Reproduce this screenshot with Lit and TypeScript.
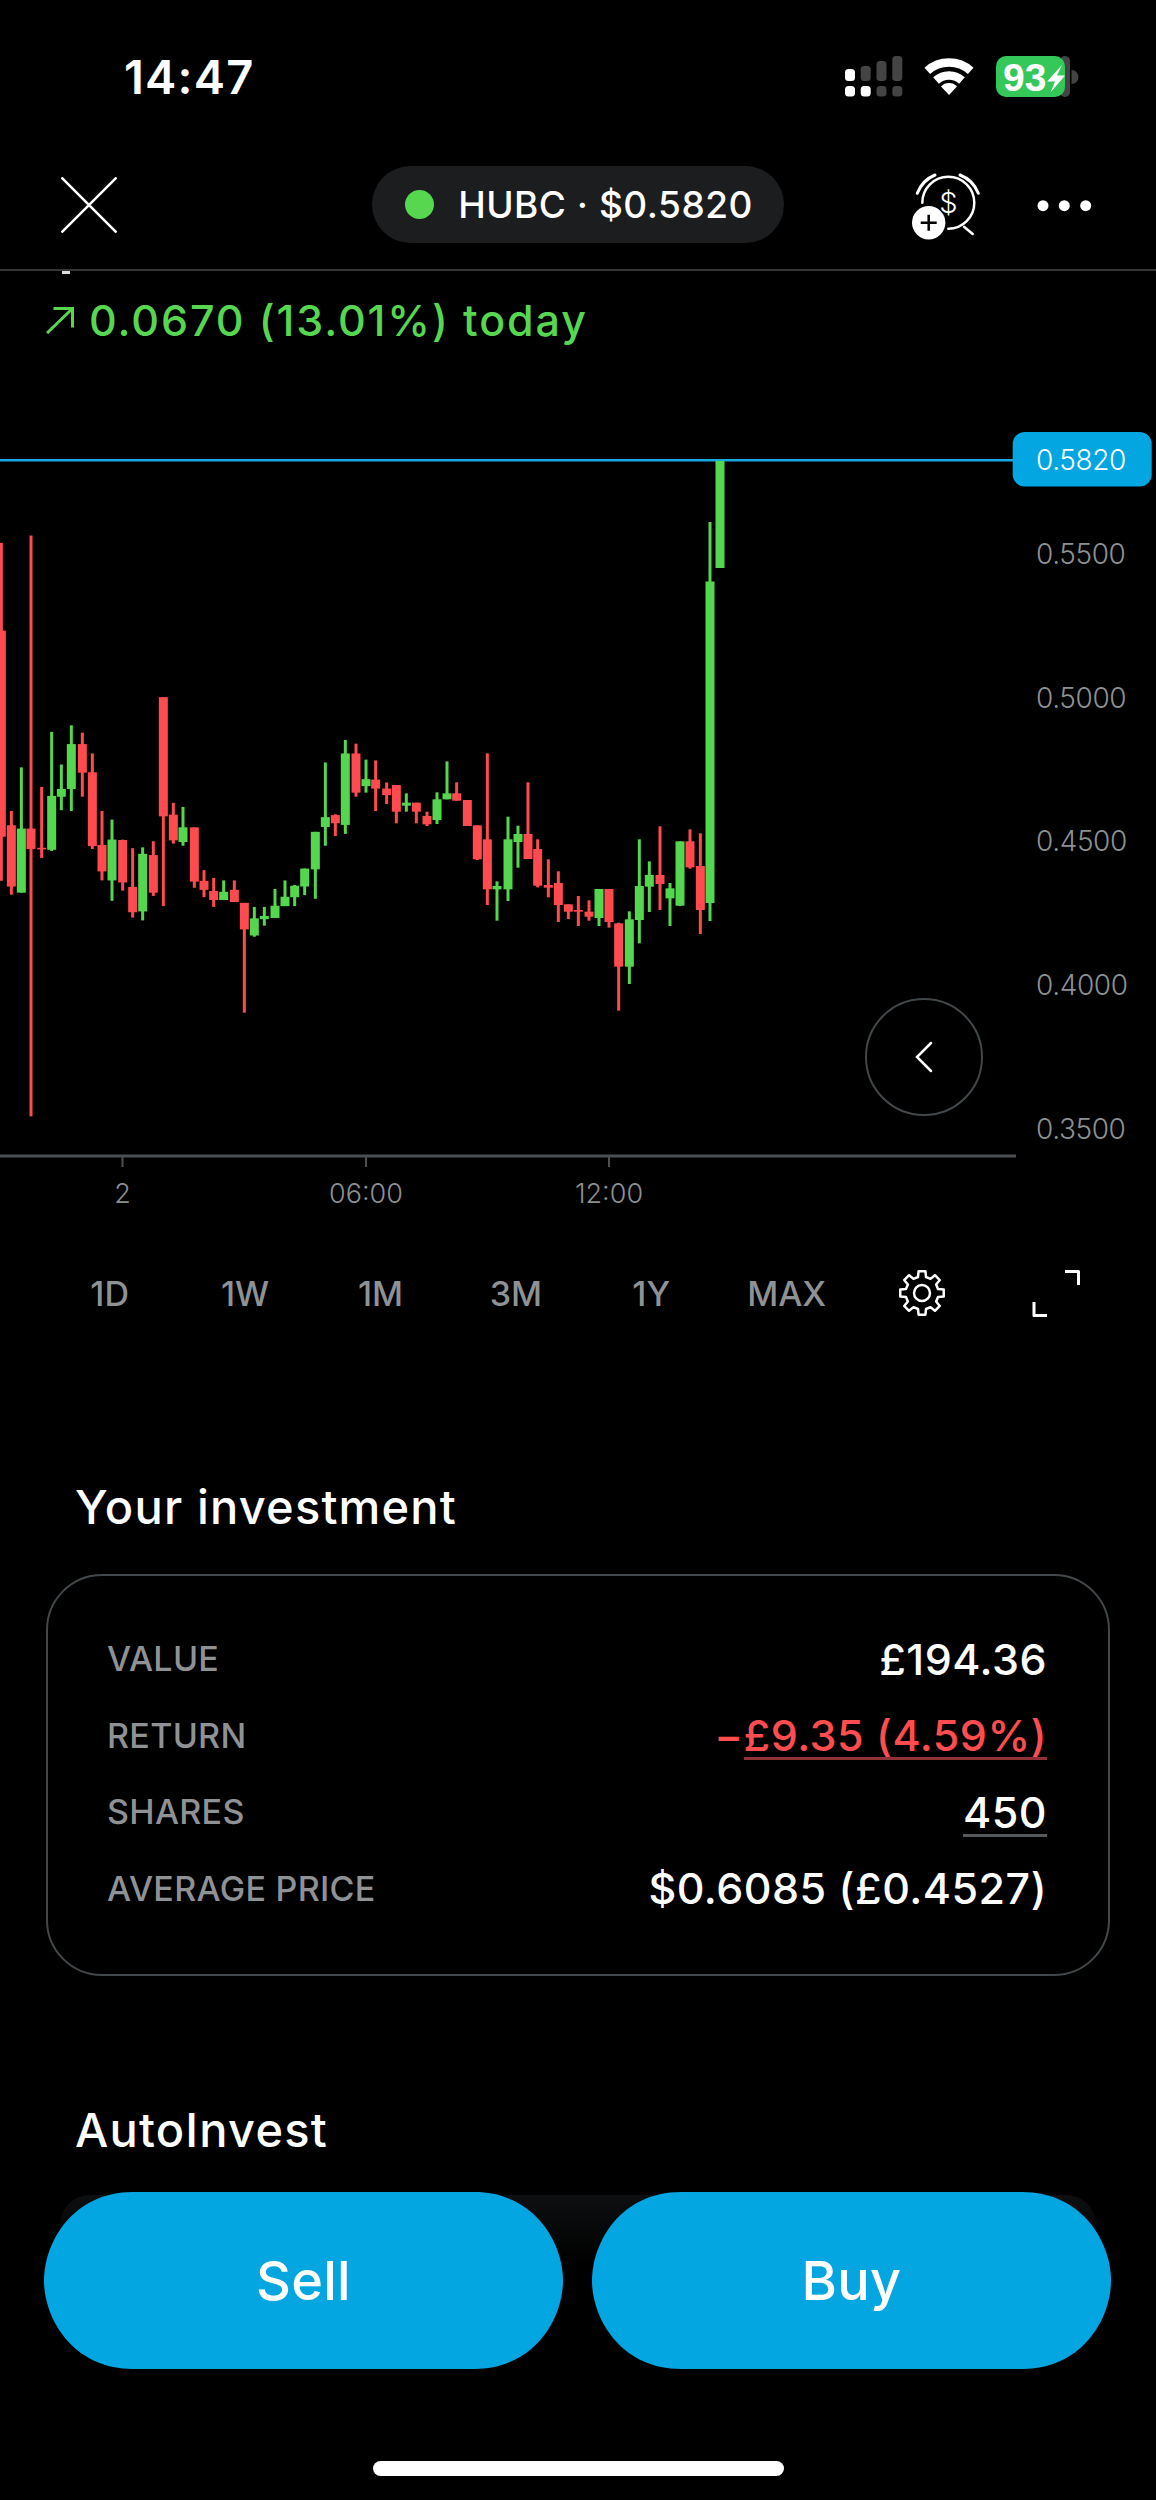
import {css, html, svg, LitElement} from 'lit';
import {customElement} from 'lit/decorators.js';

type Candle = [number, number, number, number, number, 'r' | 'g'];

// x, wick top, wick bottom, body top, body bottom, measured off the screenshot
const firstHalf: Candle[] = [
  [4, 105, 933, 320, 825, 'r'], [34, 762, 967, 797, 947, 'r'], [64, 655, 962, 805, 962, 'g'],
  [93, 87, 1510, 805, 855, 'r'], [125, 703, 877, 852, 856, 'r'], [155, 568, 860, 725, 857, 'g'],
  [184, 648, 760, 708, 727, 'g'], [214, 552, 762, 598, 708, 'g'], [247, 570, 727, 598, 668, 'r'],
  [277, 621, 855, 667, 848, 'r'], [306, 762, 932, 845, 910, 'r'], [336, 783, 982, 832, 932, 'g'],
  [368, 832, 957, 833, 937, 'r'], [398, 853, 1023, 948, 1010, 'r'], [428, 851, 1030, 867, 1008, 'g'],
  [460, 836, 970, 870, 962, 'r'], [490, 483, 995, 483, 775, 'r'], [520, 742, 842, 771, 834, 'r'],
  [549, 752, 847, 802, 838, 'g'], [583, 802, 950, 802, 935, 'r'], [612, 907, 973, 933, 955, 'r'],
  [641, 926, 997, 958, 980, 'r'], [671, 932, 980, 960, 980, 'g'], [703, 932, 985, 955, 985, 'r'],
  [733, 987, 1256, 987, 1052, 'r'], [763, 997, 1070, 1025, 1067, 'g'], [793, 997, 1043, 1019, 1027, 'g'],
  [825, 953, 1024, 994, 1024, 'g'], [855, 932, 995, 972, 995, 'g'], [884, 943, 995, 945, 973, 'g'],
  [914, 903, 968, 903, 947, 'g'], [946, 813, 977, 813, 905, 'g'], [976, 643, 847, 777, 801, 'g'],
  [1006, 770, 823, 772, 792, 'r'], [1036, 588, 818, 621, 796, 'g'], [1068, 597, 727, 621, 717, 'r'],
  [1098, 636, 717, 684, 701, 'g'], [1127, 638, 762, 685, 707, 'r'], [1160, 692, 745, 707, 723, 'r'],
];

const secondHalf: Candle[] = [
  [49, 315, 430, 315, 395, 'r'], [79, 340, 395, 368, 377, 'g'], [109, 368, 430, 368, 395, 'r'],
  [141, 395, 438, 408, 433, 'r'], [171, 337, 432, 358, 420, 'g'], [201, 244, 358, 340, 358, 'g'],
  [230, 307, 362, 340, 362, 'r'], [262, 360, 438, 360, 438, 'r'], [292, 436, 540, 436, 538, 'r'],
  [322, 220, 675, 478, 628, 'r'], [351, 604, 722, 618, 628, 'g'], [384, 410, 663, 478, 628, 'g'],
  [414, 437, 563, 462, 486, 'g'], [444, 307, 537, 462, 537, 'r'], [473, 478, 622, 507, 617, 'r'],
  [505, 538, 652, 615, 623, 'r'], [535, 574, 726, 609, 675, 'r'], [565, 673, 717, 673, 695, 'r'],
  [595, 648, 738, 690, 695, 'r'], [627, 661, 722, 695, 710, 'r'], [657, 627, 738, 627, 714, 'g'],
  [687, 627, 743, 627, 726, 'r'], [716, 728, 992, 730, 860, 'r'], [748, 694, 912, 718, 860, 'g'],
  [778, 478, 790, 618, 720, 'g'], [808, 544, 696, 585, 620, 'g'], [840, 439, 690, 585, 612, 'r'],
  [870, 609, 738, 625, 655, 'g'], [900, 484, 678, 484, 677, 'g'], [930, 448, 566, 484, 562, 'r'],
  [961, 460, 762, 558, 690, 'r'],
];

const candles: Candle[] = [
  ...firstHalf.map(([x, a, b, c, d, k]): Candle => [
    x / 3, 500 + a / 2.45, 500 + b / 2.45, 500 + c / 2.45, 500 + d / 2.45, k,
  ]),
  ...secondHalf.map(([x, a, b, c, d, k]): Candle => [
    380 + x / 3, 680 + a / 3, 680 + b / 3, 680 + c / 3, 680 + d / 3, k,
  ]),
  [710, 522, 921, 581.5, 903, 'g'],
  [720, 461, 568, 461, 568, 'g'],
];

const axisPrices = [
  ['0.5500', 554], ['0.5000', 698], ['0.4500', 841], ['0.4000', 985], ['0.3500', 1129],
] as const;
const axisTimes = [['2', 122.5], ['06:00', 366], ['12:00', 609]] as const;
const ranges = ['1D', '1W', '1M', '3M', '1Y', 'MAX'];

function gearPath(cx: number, cy: number) {
  const pts: string[] = [];
  const at = (r: number, deg: number) => {
    const a = (deg * Math.PI) / 180;
    return `${(cx + r * Math.sin(a)).toFixed(2)} ${(cy - r * Math.cos(a)).toFixed(2)}`;
  };
  for (let i = 0; i < 8; i++) {
    const mid = i * 45;
    pts.push(at(16.5, mid - 14), at(22, mid - 9), at(22, mid + 9), at(16.5, mid + 14));
  }
  return `M${pts.join('L')}Z`;
}

@customElement('app-root')
export class AppRoot extends LitElement {
  static styles = css`
    :host {
      display: block;
      position: relative;
      height: 2500px;
      overflow: hidden;
      background: #000;
      color: #fff;
      font-family: Inter, 'Liberation Sans', sans-serif;
    }
    svg {
      display: block;
    }

    .status {
      height: 166px;
      box-sizing: border-box;
      padding: 50px 71px 0 124px;
      display: flex;
      justify-content: space-between;
      align-items: flex-start;
    }
    .time {
      font-size: 47px;
      line-height: 54px;
      font-weight: 600;
      letter-spacing: 1.2px;
    }
    .batt {
      font-family: 'Liberation Sans', sans-serif;
      font-weight: 700;
      font-size: 39px;
      fill: #fff;
    }

    .nav {
      height: 105px;
      box-sizing: border-box;
      border-bottom: 2px solid #333537;
      display: grid;
      grid-template-columns: 1fr auto 1fr;
      align-items: start;
    }
    .close {
      margin: 11px 0 0 61px;
    }
    .pill {
      display: flex;
      align-items: center;
      gap: 24px;
      height: 77px;
      padding: 0 31px 0 33px;
      border-radius: 39px;
      background: #1b1d1f;
      font-size: 37px;
      font-weight: 500;
      letter-spacing: 0.5px;
      white-space: nowrap;
    }
    .dot {
      width: 29px;
      height: 29px;
      border-radius: 50%;
      background: #57d64f;
    }
    .nav-actions {
      justify-self: end;
      margin-right: 56px;
    }
    .dollar {
      font-size: 29px;
      font-weight: 300;
      fill: #fff;
    }

    .clipped {
      width: 8px;
      height: 3px;
      margin-left: 62px;
      background: #ddd;
    }
    .change {
      height: 92px;
      padding-left: 46px;
      display: flex;
      align-items: center;
      gap: 15px;
      color: #57d64f;
      font-size: 43px;
      font-weight: 500;
      letter-spacing: 1.9px;
    }

    .chart {
      position: relative;
      height: 810px;
      margin-top: 54px;
    }
    .price-tick {
      font-size: 28px;
      font-weight: 300;
      fill: #8d9092;
      letter-spacing: -0.4px;
    }
    .price-now {
      font-size: 28px;
      font-weight: 300;
      fill: #fff;
      letter-spacing: -0.4px;
    }
    .time-tick {
      font-size: 27px;
      font-weight: 300;
      fill: #8d9092;
      letter-spacing: 0;
      text-anchor: middle;
    }
    .back {
      position: absolute;
      left: 865px;
      top: 578px;
      width: 118px;
      height: 118px;
      box-sizing: border-box;
      border: 2.5px solid #41474a;
      border-radius: 50%;
      display: grid;
      place-items: center;
    }

    .ranges {
      height: 126px;
      padding-left: 42px;
      display: grid;
      grid-template-columns: repeat(8, 135.4px);
      align-items: center;
      justify-items: center;
      color: #8f9294;
      font-size: 34px;
      font-weight: 500;
    }

    .title {
      margin: 0;
      padding-left: 75px;
      font-size: 47px;
      line-height: 52px;
      font-weight: 500;
      letter-spacing: 1.2px;
    }
    .invest-title {
      margin-top: 125px;
    }
    .auto-title {
      margin-top: 128px;
    }

    .card {
      height: 402px;
      box-sizing: border-box;
      margin: 41px 46px 0;
      padding: 0 61px 3px 59px;
      border: 2.5px solid #41474a;
      border-radius: 56px;
      display: flex;
      flex-direction: column;
      justify-content: center;
    }
    .row {
      height: 76.6px;
      display: flex;
      justify-content: space-between;
      align-items: center;
    }
    .label {
      color: #8f9294;
      font-size: 34px;
      font-weight: 500;
      letter-spacing: 0.3px;
    }
    .value {
      font-size: 43px;
      font-weight: 500;
      letter-spacing: 0.5px;
      line-height: 50px;
    }
    .loss {
      color: #ff4d4f;
    }
    .link {
      display: inline-block;
      line-height: 44px;
      border-bottom: 3px solid #8f3236;
    }
    .link.plain {
      border-bottom-color: #55595c;
    }

    .dock {
      position: absolute;
      left: 0;
      right: 0;
      bottom: 0;
      height: 308px;
    }
    .dock-shade {
      position: absolute;
      left: 60px;
      right: 60px;
      top: 3px;
      height: 70px;
      border-radius: 30px 30px 0 0;
      background: linear-gradient(#0d0f10, #000);
    }
    .buttons {
      position: relative;
      display: flex;
      gap: 29px;
      padding: 0 45px 0 44px;
    }
    .btn {
      width: 519px;
      height: 177px;
      /* squircle, a plain border-radius comes out too pinched */
      clip-path: path(
        'M89 0H430C490 0 519 50 519 88.5C519 127 490 177 430 177H89C29 177 0 127 0 88.5C0 50 29 0 89 0Z'
      );
      background: #03a6e1;
      display: grid;
      place-items: center;
      font-size: 54px;
      font-weight: 500;
      letter-spacing: 0.3px;
    }
    .home {
      width: 411px;
      height: 15px;
      margin: 92px auto 0;
      border-radius: 8px;
      background: #fff;
    }
  `;

  private statusIcons() {
    const cols = [
      {x: 845, top: 69, up: '#fff', low: '#fff'},
      {x: 860.7, top: 66, up: '#444', low: '#fff'},
      {x: 876.5, top: 61, up: '#444', low: '#444'},
      {x: 892.3, top: 56, up: '#444', low: '#444'},
    ];
    return html`<svg width="245" height="52" viewBox="840 50 245 52">
      ${cols.map(
        (c) => svg`
          <rect x=${c.x} y=${c.top} width="10" height=${81 - c.top} rx="3.5" fill=${c.up} />
          <rect x=${c.x} y="86" width="10" height="10.5" rx="3.5" fill=${c.low} />
        `,
      )}
      <g fill="none" stroke="#fff" stroke-width="8.5">
        <path d="M927.3 70.9A32.5 32.5 0 0 1 970.7 70.9" />
        <path d="M936 80.5A19.5 19.5 0 0 1 962 80.5" />
      </g>
      <path d="M949 95L941 86.5A11 11 0 0 1 957 86.5Z" fill="#fff" />
      <rect x="1060" y="56" width="10" height="41" rx="5" fill="#444" />
      <rect x="996" y="56" width="69" height="41" rx="10" fill="#34c759" />
      <path d="M1071.5 70A7 7 0 0 1 1071.5 84Z" fill="#444" />
      <text class="batt" x="1003" y="90.5">93</text>
      <path d="M1062 65L1047 81.5H1055L1050.5 92.5L1065 75.5H1057Z" fill="#fff" />
    </svg>`;
  }

  private navActions() {
    return html`<svg class="nav-actions" width="190" height="80" viewBox="910 166 190 80">
      <g fill="none" stroke="#fff" stroke-linecap="round">
        <path d="M922.3 202.7A26 26 0 1 1 948.3 228.7" stroke-width="2.5" />
        <path d="M917.3 193.3A32 32 0 0 1 935 175" stroke-width="3" />
        <path d="M960 175A32 32 0 0 1 978.3 193.3" stroke-width="3" />
        <path d="M964 226.7L972.7 234" stroke-width="2.5" />
      </g>
      <text class="dollar" x="948.5" y="213" text-anchor="middle">$</text>
      <circle cx="928.7" cy="222.7" r="16.7" fill="#fff" />
      <path d="M920.7 222.7H936.7M928.7 214.7V230.7" stroke="#000" stroke-width="2.5" />
      <circle cx="1043" cy="205.7" r="5.5" fill="#fff" />
      <circle cx="1064.3" cy="205.7" r="5.5" fill="#fff" />
      <circle cx="1085.7" cy="205.7" r="5.5" fill="#fff" />
    </svg>`;
  }

  private chart() {
    return html`<svg width="1156" height="810" viewBox="0 420 1156 810">
      <rect x="0" y="459" width="1014" height="2.5" fill="#1aa8e0" />
      ${candles.map(([x, wt, wb, bt, bb, k]) => {
        const fill = k === 'r' ? '#ff4b4f' : '#55d64f';
        return svg`
          <rect x=${x - 1.5} y=${wt} width="3" height=${wb - wt} fill=${fill} />
          <rect x=${x - 4.5} y=${bt} width="9" height=${bb - bt} fill=${fill} />
        `;
      })}
      <rect x="1012.7" y="432" width="139" height="54.5" rx="12" fill="#03a6e1" />
      <text class="price-now" x="1036" y="470">0.5820</text>
      ${axisPrices.map(
        ([label, y]) => svg`<text class="price-tick" x="1036" y=${y + 10}>${label}</text>`,
      )}
      <rect x="0" y="1154.5" width="1016" height="3" fill="#4a4f53" />
      ${axisTimes.map(
        ([label, x]) => svg`
          <rect x=${x - 1} y="1157" width="2" height="10" fill="#4a4f53" />
          <text class="time-tick" x=${x} y="1203">${label}</text>
        `,
      )}
    </svg>`;
  }

  render() {
    return html`
      <div class="status">
        <div class="time">14:47</div>
        ${this.statusIcons()}
      </div>

      <div class="nav">
        <svg class="close" width="56" height="56" viewBox="0 0 56 56">
          <path d="M0.5 0.5L55.5 55.5M55.5 0.5L0.5 55.5" stroke="#fff" stroke-width="2.5" />
        </svg>
        <div class="pill">
          <span class="dot"></span>
          <span>HUBC · $0.5820</span>
        </div>
        ${this.navActions()}
      </div>

      <div class="clipped"></div>
      <div class="change">
        <svg width="28" height="27" viewBox="0 0 28 27">
          <path d="M1 26L26.5 1.5M7.5 1.5H26.5V20.5" fill="none" stroke="#57d64f" stroke-width="3" />
        </svg>
        <span>0.0670 (13.01%) today</span>
      </div>

      <div class="chart">
        ${this.chart()}
        <div class="back">
          <svg width="18" height="32" viewBox="0 0 18 32">
            <path d="M16 2L2 16L16 30" fill="none" stroke="#fff" stroke-width="2.5" stroke-linecap="round" />
          </svg>
        </div>
      </div>

      <div class="ranges">
        ${ranges.map((r) => html`<span>${r}</span>`)}
        <svg width="50" height="50" viewBox="897 1268 50 50">
          <path d=${gearPath(922, 1293)} fill="none" stroke="#fff" stroke-width="2.5" stroke-linejoin="round" />
          <circle cx="922" cy="1293" r="8" fill="none" stroke="#fff" stroke-width="2.5" />
        </svg>
        <svg width="50" height="50" viewBox="1033 1269 50 50">
          <path d="M1066 1272.5H1079.5V1286M1035 1303V1316.5H1048" fill="none" stroke="#fff" stroke-width="3" stroke-linejoin="round" />
        </svg>
      </div>

      <h2 class="title invest-title">Your investment</h2>
      <div class="card">
        <div class="row">
          <span class="label">VALUE</span>
          <span class="value">£194.36</span>
        </div>
        <div class="row">
          <span class="label">RETURN</span>
          <span class="value loss">−<span class="link">£9.35 (4.59%)</span></span>
        </div>
        <div class="row">
          <span class="label">SHARES</span>
          <span class="value"><span class="link plain">450</span></span>
        </div>
        <div class="row">
          <span class="label">AVERAGE PRICE</span>
          <span class="value">$0.6085 (£0.4527)</span>
        </div>
      </div>

      <h2 class="title auto-title">AutoInvest</h2>

      <div class="dock">
        <div class="dock-shade"></div>
        <div class="buttons">
          <div class="btn">Sell</div>
          <div class="btn">Buy</div>
        </div>
        <div class="home"></div>
      </div>
    `;
  }
}
